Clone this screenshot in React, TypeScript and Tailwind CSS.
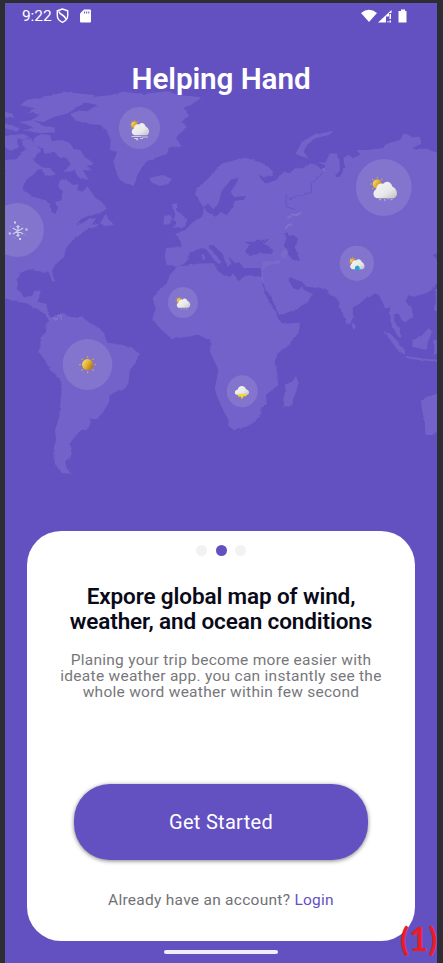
const LAND = [
  // North America
  "M15 480 50 478 58 464 84 460 100 482 122 498 138 512 118 508 95 525 74 545 68 568 100 590 140 602 150 612 155 636 166 642 173 625 165 606 185 600 186 575 175 557 180 538 200 536 218 555 235 552 232 570 250 576 262 558 272 572 285 592 302 604 322 625 300 640 270 646 242 658 228 676 250 668 270 654 288 656 276 674 297 672 290 680 262 688 240 705 215 722 198 745 192 772 165 795 156 812 160 832 166 845 156 842 146 815 120 815 90 808 62 818 52 838 54 870 74 890 95 888 104 872 122 872 118 890 112 905 140 912 145 944 155 955 166 962 150 966 135 942 110 926 80 910 50 905 15 895Z",
  // South America
  "M150 960 140 970 138 995 120 1015 122 1040 114 1055 135 1080 150 1110 178 1134 186 1155 182 1200 178 1250 165 1290 168 1320 160 1350 160 1380 174 1405 186 1420 216 1421 200 1405 195 1385 210 1370 215 1345 206 1335 222 1315 240 1292 265 1285 273 1265 262 1243 270 1256 290 1258 310 1235 328 1205 328 1187 345 1176 370 1170 385 1150 390 1110 410 1085 416 1060 395 1042 350 1032 322 1028 312 1000 295 980 272 970 245 950 215 952 182 940 160 950Z",
  // Greenland
  "M210 342 235 332 262 334 292 315 248 306 270 292 330 286 368 275 430 282 500 274 540 286 606 292 572 315 550 324 568 348 544 364 562 382 540 400 528 414 545 440 512 440 500 462 465 474 440 484 424 505 411 530 401 558 380 552 360 540 350 520 340 485 352 455 330 450 332 420 320 392 300 374 260 371 225 360Z",
  // Arctic archipelago
  "M60 316 80 300 130 290 200 276 286 286 262 302 232 322 204 340 160 352 130 366 96 360 120 344 84 336 104 325Z",
  "M58 366 100 360 130 378 164 382 165 397 120 400 70 391 100 382Z",
  "M15 335 38 342 42 354 15 352ZM15 370 30 376 56 384 50 395 15 384ZM46 404 70 402 90 412 76 420 56 416Z",
  "M15 408 30 404 56 406 50 430 58 440 34 452 15 440Z",
  "M62 422 92 418 112 440 124 450 102 476 76 470 58 460 80 448Z",
  "M98 414 126 402 150 405 156 424 184 420 208 428 222 446 240 450 256 470 286 495 262 496 274 512 248 510 267 540 235 532 224 512 190 516 212 494 200 474 176 470 160 455 134 462 128 446 104 436Z",
  "M122 502 148 505 168 522 150 528 134 524Z",
  // Atlantic islands
  "M447 534 465 530 490 525 516 537 505 552 480 558 455 548Z",
  "M515 612 532 610 528 630 548 644 562 664 554 680 518 684 530 670 520 660 526 646Z",
  "M492 652 510 641 519 656 508 673 490 674Z",
  "M300 670 318 641 325 658 343 675 315 678Z",
  // Europe, Asia and Africa
  "M585 582 590 565 620 540 640 520 655 500 668 490 700 482 735 473 760 480 800 495 820 515 815 528 790 530 775 525 785 540 800 550 830 540 840 524 852 516 870 520 885 505 910 505 932 490 950 496 966 510 974 496 950 486 976 488 990 460 1010 460 1018 480 1020 510 1005 530 1020 530 1036 500 1030 475 1045 464 1060 475 1080 464 1070 450 1104 450 1150 444 1165 430 1200 420 1214 400 1236 410 1260 410 1264 430 1236 446 1280 446 1311 458V760L1298 766 1311 778V850L1290 875 1260 885 1240 890 1225 886 1215 902 1236 925 1238 950 1215 967 1205 960 1195 940 1180 945 1185 970 1198 985 1206 1015 1195 1010 1180 985 1172 965 1168 918 1155 925 1145 900 1130 880 1102 890 1080 910 1058 925 1060 950 1050 972 1040 970 1025 935 1014 900 1004 890 990 885 975 865 920 860 905 845 890 840 870 830 865 840 880 865 896 870 906 858 910 868 936 882 925 905 885 930 837 945 820 905 805 880 792 854 784 845 800 892 824 930 832 950 848 972 900 968 896 998 866 1036 834 1060 824 1085 832 1120 834 1155 798 1185 800 1210 785 1222 784 1240 765 1265 740 1280 700 1288 686 1278 684 1256 666 1225 644 1170 655 1110 630 1055 632 1022 595 1004 550 1012 515 1017 480 985 458 960 465 920 458 895 478 870 500 850 510 825 530 800 500 795 494 768 498 744 545 740 540 716 525 702 556 690 580 665 606 650 612 626 604 612Z",
  "M888 460 906 425 941 405 1001 392 986 405 946 415 921 435 911 455 926 475 901 468Z",
  // Indian Ocean
  "M888 1128 896 1150 888 1175 871 1218 854 1220 849 1200 858 1175 854 1155 876 1145Z",
  "M1058 965 1068 980 1061 990 1056 978Z",
  // Indonesia, Philippines and Australia
  "M1151 992 1176 1005 1214 1050 1216 1064 1196 1055 1171 1020Z",
  "M1216 1068 1266 1075 1311 1080 1311 1085 1256 1080 1221 1075Z",
  "M1236 1020 1261 1010 1286 985 1296 995 1286 1020 1278 1050 1256 1045 1238 1040Z",
  "M1298 1020 1311 1018 1311 1060 1301 1065 1304 1040ZM1304 870 1311 864 1311 935 1304 930 1308 900Z",
  "M1311 1182 1281 1190 1263 1202 1266 1230 1274 1260 1276 1300 1296 1305 1311 1296Z",
];

const SEA = [
  // Mediterranean
  "M530 799 550 795 562 778 572 757 595 748 612 742 628 758 642 780 658 792 664 786 652 770 630 748 626 736 640 735 668 762 682 800 694 792 688 772 706 790 718 786 730 804 780 804 785 815 780 828 755 825 735 828 714 842 700 820 690 830 668 824 650 808 642 790 600 790 560 797Z",
  // Baltic
  "M610 620 625 612 640 628 656 610 664 576 694 538 716 535 706 555 692 575 702 592 738 588 732 600 706 602 698 622 680 646 664 636 646 650 628 640Z",
  // Black Sea, Caspian and Persian inlets
  "M735 754 750 735 734 726 760 725 776 718 796 732 820 750 815 762 780 760 748 768ZM780 722 808 716 796 728Z",
  "M858 712 880 705 896 718 884 740 900 782 880 780 866 765 854 740Z",
  "M855 698 864 702 870 715 858 712Z",
];

const SHIELD = "M7 1 1.4 3v5c0 3.7 2.4 6 5.6 7.3C10.200 14 12.600 11.700 12.600 8V3Z";

const RAY_ANGLES = [0, 45, 90, 135, 180, 225, 270, 315];

function Cloud({ x, y, s }: { x: number; y: number; s: number }) {
  return (
    <g transform={`translate(${x} ${y}) scale(${s})`}>
      <path d="M6 20.500C0 21-1 13 3.500 11 4 6 8 4 11 5.500 14 1.500 19 3 20.500 8 25.500 10 28 18 22 20.500Z" fill="url(#cloud)" />
    </g>
  );
}

function Sun({ x, y, r }: { x: number; y: number; r: number }) {
  return (
    <g>
      {RAY_ANGLES.map((angle) => (
        <path
          key={angle}
          d={`M${x} ${y - r * 1.2}V${y - r * 1.55}`}
          transform={`rotate(${angle} ${x} ${y})`}
          stroke="#d3a746"
          strokeWidth={0.8 + r * 0.06}
        />
      ))}
      <circle cx={x} cy={y} r={r} fill="url(#sun)" />
    </g>
  );
}

function WorldMap() {
  return (
    <svg className="block h-[400px] w-[432px]" viewBox="5 80 432 400" aria-hidden="true">
      <defs>
        <filter id="coast" x="0" y="0" width="1329" height="1500" filterUnits="userSpaceOnUse">
          <feTurbulence type="fractalNoise" baseFrequency="0.19" numOctaves="2" seed="4" />
          <feDisplacementMap in="SourceGraphic" scale="2.6" xChannelSelector="R" yChannelSelector="G" />
        </filter>
        <linearGradient id="cloud" x1="0" y1="0" x2="1" y2="1">
          <stop stopColor="#f7f7f7" />
          <stop offset=".6" stopColor="#e8e8e9" />
          <stop offset="1" stopColor="#c0c0c5" />
        </linearGradient>
        <linearGradient id="sun" x1="0" y1="0.2" x2="1" y2="0.8">
          <stop stopColor="#f7e26a" />
          <stop offset=".5" stopColor="#e2ae2b" />
          <stop offset="1" stopColor="#a86d16" />
        </linearGradient>
      </defs>
      <g filter="url(#coast)">
        <g transform="scale(.33333)">
          {LAND.map((d) => <path key={d} d={d} fill="#7262c9" />)}
          {SEA.map((d) => <path key={d} d={d} fill="#6351c2" />)}
          <path d="M605 764 612 762 616 776 608 782ZM636 800 652 798 648 804Z" fill="#7262c9" />
          <path d="M979 507 944 543 934 550V577L904 586 866 597M858 585V620L884 628" fill="none" stroke="#6654c2" strokeWidth="3" />
          <path d="M862 655 878 645 898 642 902 635M856 687 864 676 878 672M968 505 976 514" fill="none" stroke="#8072cf" strokeWidth="5" />
          <path d="M788 786 842 780 838 792 796 798 788 812 792 850 784 838ZM842 762 852 750 866 755 850 780Z" fill="#796aca" />
          <path d="M148 957 160 954 168 961 178 952M172 947 184 946 184 960" fill="none" stroke="#8072cf" strokeWidth="4" />
        </g>
      </g>
      <g fill="#8374cd">
        <ellipse cx="139.500" cy="128" rx="20.600" ry="21" />
        <ellipse cx="383.800" cy="187.500" rx="27.900" ry="28.500" />
        <ellipse cx="17.300" cy="230" rx="26.600" ry="27" />
        <ellipse cx="356.800" cy="263.300" rx="17.200" ry="17.600" />
        <ellipse cx="183" cy="302.500" rx="15" ry="15.500" />
        <ellipse cx="87.500" cy="364.500" rx="24.800" ry="25.500" />
        <ellipse cx="242.200" cy="391.200" rx="15.500" ry="16" />
      </g>

      <Sun x={134.600} y={124.800} r={3.3} />
      <Cloud x={131.300} y={120.800} s={0.7} />
      <path d="M131.500 136.500h10M142 137h6M134 138.500h4M140 138.500h3M136 139.700h2.500" stroke="#d9d6e7" strokeWidth=".9" />

      <Sun x={377.300} y={184} r={4.600} />
      <Cloud x={372.800} y={178.800} s={0.95} />
      <path d="M379 199.500h2M384 200h1.500M387.500 198.500h1.500M390.500 199.500h2" stroke="#b5b0cd" strokeWidth="1.600" />

      <path
        d="M18 225v12M12.800 228l10.400 6M12.800 234l10.400-6M16.500 226.200l1.500 1.300 1.500-1.300M16.500 235.800l1.500-1.300 1.500 1.300"
        stroke="#cdd0ea"
        strokeWidth="1.200"
        fill="none"
      />
      <path d="M14 221.500h2v2h-2zM25.500 228.500h2v2h-2zM8.800 232.500h2v2h-2zM19 238h2v2h-2z" fill="#d2d3e8" />
      <path d="M21.500 223.800h1.200v1.200h-1.200zM9.800 225.800H11V227H9.800zM24.500 234h1.200v1.200h-1.200zM14 237h1.200v1.200H14z" fill="#70a5df" />

      <Sun x={352.600} y={261} r={2.600} />
      <Cloud x={349.800} y={257.300} s={0.58} />
      <path d="M355 267q2.300-3 4.600 0v2.600q-2.300 2.500-4.600 0z" fill="#2ba2ce" />

      <Sun x={179.300} y={300.500} r={2.400} />
      <Cloud x={176.500} y={296.800} s={0.54} />
      <path d="M180.500 309h1M183.500 309h1M186.200 309h1" stroke="#bcb7d4" strokeWidth="1" />

      <Sun x={87.600} y={364.600} r={5.500} />

      <path d="M237 395c-3-.8-3-4.600.5-5.200 1.200-5 7-5 8.500-.6 4 .8 3.800 5.200 1 5.800z" fill="url(#cloud)" />
      <path d="M237.500 394h9.500l-1 2.500-2-.5-2.300 3.200-.9-2.700-2.400.3z" fill="#efd929" />
    </svg>
  );
}

export default function App() {
  return (
    <main className="h-[963px] w-[443px] overflow-hidden border-t-[3px] border-r-[6px] border-l-[5px] border-[#2c2e33] bg-[#6351c2] font-['Roboto',sans-serif]">
      <header className="flex h-[25px] items-center justify-between pr-[29px] pl-[17px] text-white">
        <div className="flex items-center">
          <span className="w-[34px] pt-px text-[15.500px] leading-[25px] tracking-[-.1px]">9:22</span>
          <svg className="h-[15px] w-[13px]" viewBox="0 0 14 16" fill="none" stroke="white" strokeWidth="1.500">
            <path d={SHIELD} />
            <path d="M3 3.500c1 4 6.500 3.500 7.800 8.500" strokeWidth="1.700" />
          </svg>
          <svg className="ml-[11px] h-[14px] w-[11px]" viewBox="0 0 11 14">
            <path fill="white" d="M4 .5h6q1 0 1 1v11q0 1-1 1H1q-1 0-1-1v-8Z" />
            <path stroke="#6351c2" strokeWidth="1" d="M4.600 2.500v2M6.700 2.500v2M8.800 2.500v2" />
          </svg>
        </div>
        <svg className="h-[14px] w-[47px]" viewBox="0 0 47 14" fill="white">
          <path d="M0 4Q8 -2.500 16 4L8 13Z" />
          <path d="M17 13.500 30.500 1V4H28v3.500h-3v6ZM28.500 5h1.500v5h-1.500zM28.500 11.500h1.500V13.500h-1.500zM26.500 12h1v1.500h-1z" />
          <path d="M40 .5h4V2h1.500v11.500h-8V2H40Z" />
        </svg>
      </header>

      <h1 className="mt-[32px] text-center text-[29.700px] leading-[38px] font-semibold tracking-[-.1px] text-white">
        <span className="relative">Helping Hand</span>
      </h1>
      <div className="-mt-[18px]">
        <WorldMap />
      </div>

      <section className="mt-[51px] ml-[22px] flex h-[410px] w-[388px] flex-col items-center rounded-[34px] bg-white text-center">
        <div className="mt-[14px] flex gap-[8.500px]">
          <i className="size-[11px] rounded-full bg-[#f2f2f2]" />
          <i className="size-[11px] rounded-full bg-[#6351c2]" />
          <i className="size-[11px] rounded-full bg-[#f2f2f2]" />
        </div>
        <h2 className="mt-[28px] text-[22.500px] leading-[25.300px] font-semibold tracking-[-.12px] whitespace-nowrap text-[#090a18]">
          Expore global map of wind,
          <br />
          weather, and ocean conditions
        </h2>
        <p className="mt-[17px] text-[15.500px] leading-[16px] tracking-[.27px] whitespace-nowrap text-[#77777b]">
          Planing your trip become more easier with
          <br />
          ideate weather app. you can instantly see the
          <br />
          whole word weather within few second
        </p>
        <button className="mt-[84px] h-[76px] w-[294px] shrink-0 rounded-[36px] bg-[#6351c2] text-[20px] tracking-[.3px] text-white shadow-[0_1px_4px_rgba(0,0,0,0.5)]">
          Get Started
        </button>
        <p className="mt-[30px] text-[15.500px] leading-[20px] tracking-[.27px] whitespace-nowrap text-[#717176]">
          Already have an account? <a className="text-[#6351c2]">Login</a>
        </p>
      </section>
      <div className="mt-[8.500px] ml-[159px] h-[4px] w-[114px] rounded-full bg-[#f0edfb]" />
      <span className="absolute top-[918px] left-[400px] font-['Lato',sans-serif] text-[33px] leading-[40px] font-bold text-[#ed1c24]">(1)</span>
    </main>
  );
}
